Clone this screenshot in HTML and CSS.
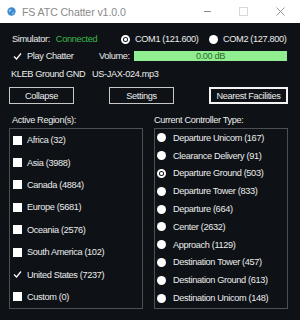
FILE: index.html
```html
<!DOCTYPE html>
<html lang="en">
<head>
  <meta charset="UTF-8" />
  <meta name="viewport" content="width=device-width, initial-scale=1.0" />
  <title>FS ATC Chatter v1.0.0</title>
  <link rel="stylesheet" href="styles.css">
</head>
<body>
  <div class="titlebar">
    <svg class="app-icon" width="9" height="9" viewBox="0 0 10 10">
      <circle cx="5" cy="5" r="4.6" fill="#3d8ad0"/>
      <path d="M2 3.5 Q3.5 2 5 3 Q4 5 2.5 5.5 Z" fill="#9fd0f0"/>
      <path d="M6 6 Q7.5 5.5 8.5 6.5 Q7 8.5 5.5 8 Z" fill="#8cc4ea"/>
    </svg>
    <span class="title">FS ATC Chatter v1.0.0</span>
    <div class="win-controls">
      <span class="win-min"></span>
      <span class="win-max"></span>
      <svg class="win-close" width="9" height="9" viewBox="0 0 9 9">
        <path d="M0.5 0.5 L8.5 8.5 M8.5 0.5 L0.5 8.5" stroke="#8a8a8a" stroke-width="0.9"/>
      </svg>
    </div>
  </div>

  <div class="main">
    <div class="row row-status">
      <div class="status">Simulator:<span class="connected">Connected</span></div>
      <label class="radio com1"><span class="dot selected"></span>COM1 (121.600)</label>
      <label class="radio"><span class="dot"></span>COM2 (127.800)</label>
    </div>

    <div class="row row-play">
      <label class="check play"><span class="box checked"><svg width="9" height="9" viewBox="0 0 9 9"><path d="M1 4.5 L3.5 7 L8 1.5" fill="none" stroke="#fff" stroke-width="1.2"/></svg></span>Play Chatter</label>
      <span class="volume-label">Volume:</span>
      <div class="volume-bar">0.00 dB</div>
    </div>

    <div class="row row-info">
      <span class="facility">KLEB Ground GND</span>
      <span class="file">US-JAX-024.mp3</span>
    </div>

    <div class="buttons">
      <button>Collapse</button>
      <button>Settings</button>
      <button class="primary">Nearest Facilities</button>
    </div>

    <div class="panels">
      <div class="panel">
        <div class="panel-label">Active Region(s):</div>
        <div class="list regions">
          <label class="check"><span class="box"></span>Africa (32)</label>
          <label class="check"><span class="box"></span>Asia (3988)</label>
          <label class="check"><span class="box"></span>Canada (4884)</label>
          <label class="check"><span class="box"></span>Europe (5681)</label>
          <label class="check"><span class="box"></span>Oceania (2576)</label>
          <label class="check"><span class="box"></span>South America (102)</label>
          <label class="check"><span class="box checked"><svg width="9" height="9" viewBox="0 0 9 9"><path d="M1 4.5 L3.5 7 L8 1.5" fill="none" stroke="#fff" stroke-width="1.2"/></svg></span>United States (7237)</label>
          <label class="check"><span class="box"></span>Custom (0)</label>
        </div>
      </div>
      <div class="panel">
        <div class="panel-label">Current Controller Type:</div>
        <div class="list controllers">
          <label class="radio"><span class="dot"></span>Departure Unicom (167)</label>
          <label class="radio"><span class="dot"></span>Clearance Delivery (91)</label>
          <label class="radio"><span class="dot selected"></span>Departure Ground (503)</label>
          <label class="radio"><span class="dot"></span>Departure Tower (833)</label>
          <label class="radio"><span class="dot"></span>Departure (664)</label>
          <label class="radio"><span class="dot"></span>Center (2632)</label>
          <label class="radio"><span class="dot"></span>Approach (1129)</label>
          <label class="radio"><span class="dot"></span>Destination Tower (457)</label>
          <label class="radio"><span class="dot"></span>Destination Ground (613)</label>
          <label class="radio"><span class="dot"></span>Destination Unicom (148)</label>
        </div>
      </div>
    </div>
  </div>
</body>
</html>
```

FILE: styles.css
```css
body {
  margin: 0;
  width: 300px;
  height: 320px;
  overflow: hidden;
  font-family: "Liberation Sans", Arial, sans-serif;
  font-size: 9.2px;
  letter-spacing: -0.35px;
  white-space: nowrap;
  color: #ececec;
  background: #0e1216;
}
.titlebar {
  height: 23px;
  background: #fff;
  display: flex;
  align-items: center;
  padding-left: 7px;
}
.app-icon {
  margin-right: 6px;
}
.title {
  color: #8a8a8a;
  font-size: 10.6px;
  letter-spacing: -0.1px;
}
.win-controls {
  margin-left: auto;
  display: flex;
  align-items: center;
}
.win-min {
  width: 7px;
  height: 1px;
  background: #8a8a8a;
  margin-right: 28px;
}
.win-max {
  width: 7px;
  height: 7px;
  border: 1px solid #d8d8d8;
  margin-right: 28px;
}
.win-close {
  margin-right: 15px;
}
.main {
  padding: 8px 12px 0 9px;
}
.row {
  display: flex;
  align-items: center;
}
.row-status {
  height: 16px;
}
.status {
  width: 109px;
  padding-left: 3px;
}
.connected {
  color: #3db94a;
  margin-left: 6px;
}
.radio {
  display: flex;
  align-items: center;
}
.com1 {
  width: 88px;
}
.dot {
  width: 9px;
  height: 9px;
  border-radius: 50%;
  background: #fff;
  margin-right: 5px;
  box-sizing: border-box;
  flex: none;
}
.dot.selected {
  border: 2px solid #fff;
  background: radial-gradient(circle, #fff 0 1.3px, #0e1216 1.6px);
}
.row-play {
  height: 18px;
}
.check {
  display: flex;
  align-items: center;
}
.play {
  width: 86px;
  padding-left: 4px;
}
.box {
  width: 9px;
  height: 9px;
  background: #fff;
  margin-right: 5px;
  flex: none;
  display: flex;
}
.box.checked {
  background: transparent;
}
.volume-label {
  width: 35px;
}
.volume-bar {
  width: 153px;
  height: 10px;
  line-height: 10px;
  background: #90ee90;
  color: #2d6b2d;
  text-align: center;
}
.row-info {
  height: 17px;
  padding-left: 2px;
}
.facility {
  width: 81px;
}
.buttons {
  display: flex;
  justify-content: space-between;
  margin-top: 5px;
}
button {
  font: inherit;
  letter-spacing: inherit;
  color: #ececec;
  background: #0e1216;
  border: 1px solid #c8c8c8;
  height: 17px;
  width: 65px;
  padding: 0;
}
button.primary {
  width: 79px;
  border: 2px solid #f4f4f4;
}
.panels {
  display: flex;
  gap: 11px;
  margin-top: 9px;
}
.panel {
  width: 135px;
}
.panel-label {
  height: 15px;
  line-height: 14px;
  padding-left: 3px;
}
.panel:last-child .panel-label {
  padding-left: 0;
}
.list {
  border: 1px solid #4b5054;
  height: 179px;
}
.regions .check {
  height: 22.4px;
  padding-left: 3px;
}
.controllers .radio {
  height: 17.8px;
  padding-left: 2px;
}
.controllers .dot {
  margin-right: 7px;
}
```
